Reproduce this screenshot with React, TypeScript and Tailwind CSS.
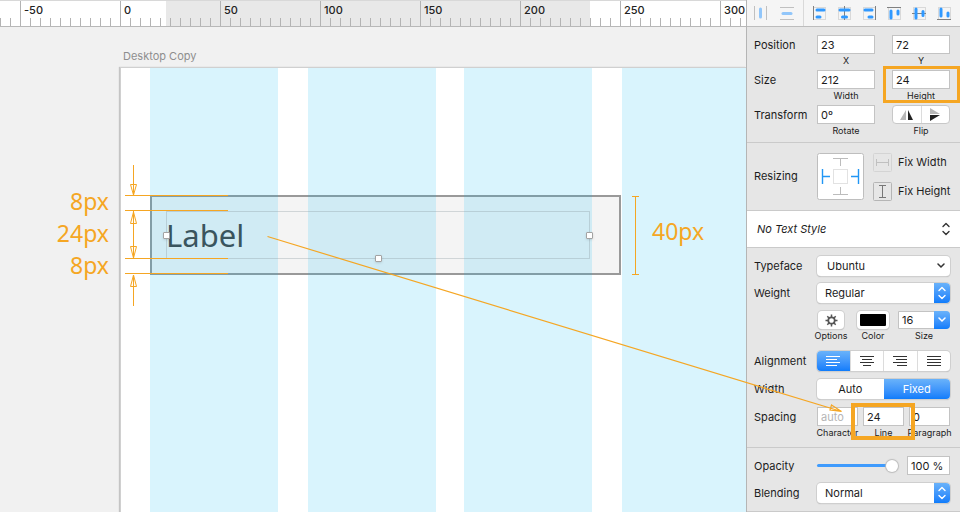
import React, { useState } from 'react';
import clsx from 'clsx';

const rulerUnits = ['-50', '0', '50', '100', '150', '200', '250', '300'];
const minorTicks = [1, 2, 3, 4, 5, 6, 7, 8, 9];

const Ruler: React.FC = () => (
    <div className="relative h-[27px] overflow-hidden border-t border-b border-t-[#d8d8d8] border-b-[#b8b8b8] bg-white">
        {/* Range covered by the selected layer */}
        <div className="absolute inset-y-0 left-[166px] w-[424px] bg-[#e8e8e8]" />
        <div className="relative flex h-full w-max">
            <div className="flex w-5 items-end gap-[9px]">
                <div className="h-2 w-px bg-[#b3b3b3]" />
                <div className="h-2 w-px bg-[#b3b3b3]" />
            </div>
            {rulerUnits.map((unit) => (
                <div key={unit} className="relative flex h-full w-[100px] items-end border-l border-[#b3b3b3]">
                    <span className="absolute top-0 left-[3px] text-[11px] leading-[18px] font-medium text-[#222]">{unit}</span>
                    {minorTicks.map((tick) => (
                        <div key={tick} className="ml-[9px] h-2 w-px bg-[#b3b3b3]" />
                    ))}
                </div>
            ))}
        </div>
    </div>
);

const Handle: React.FC<{ className: string }> = ({ className }) => (
    <div className={clsx('absolute size-[7px] rounded-[1px] border border-[#a3a3a3] bg-white shadow-sm', className)} />
);

const Canvas: React.FC = () => (
    <main className="relative flex min-w-0 flex-1 flex-col overflow-hidden bg-[#f1f1f1]">
        <Ruler />
        <p className="mt-5 ml-[123px] h-5 text-[11px] leading-[18px] text-[#8e8e8e]">Desktop Copy</p>
        <div className="relative ml-[120px] flex-1 border-t border-l border-[#d0d0d0] bg-white shadow-[-1px_0_1px_#c4c4c4]">
            {/* Form field and its text layer */}
            <div className="absolute top-[127px] left-[29px] h-20 w-[471px] border-2 border-[#999] bg-[#f4f4f4]">
                <span className="absolute top-3.5 left-3.5 font-['Noto_Sans'] text-[31px] leading-[48px] text-[#444]">Label</span>
            </div>
            {/* Layout columns */}
            <div className="absolute inset-0 grid grid-cols-[29px_128px_30px_128px_28px_128px_30px_1fr]">
                <div className="col-start-2 bg-[#00b7f2]/15" />
                <div className="col-start-4 bg-[#00b7f2]/15" />
                <div className="col-start-6 bg-[#00b7f2]/15" />
                <div className="col-start-8 bg-[#00b7f2]/15" />
            </div>
            {/* Selection */}
            <div className="absolute top-[143px] left-[45px] h-12 w-[424px] border border-[#8c9ca0]/35">
                <Handle className="top-5 -left-1" />
                <Handle className="top-5 -right-1" />
                <Handle className="-bottom-1 left-[208px]" />
            </div>
        </div>
    </main>
);

const Annotations: React.FC = () => (
    <div className="pointer-events-none absolute inset-0 font-['Noto_Sans'] text-[23px] leading-8 text-[#f5a623]">
        <svg className="absolute top-0 left-0" width="960" height="512" fill="none" stroke="#f5a623">
            <path d="M125 195.5H228M125 210.5H228M125 258.5H228M125 273.5H228" strokeWidth="1.2" />
            <path d="M133.5 165V195M130.5 184.5H136.5L133.5 195Z" />
            <path d="M133.5 211V258M130.5 223.5H136.5L133.5 212ZM130.5 246.5H136.5L133.5 258Z" />
            <path d="M133.5 275V306M130.5 286.5H136.5L133.5 275Z" />
            <path d="M635.5 196V274M632 196.5H639M632 274.5H639" />
            <path d="M267.5 236.5L841.5 411.5M831.5 405L841.5 411.5L830 410Z" strokeWidth="1.2" />
        </svg>
        <div className="absolute top-[185px] left-0 flex w-[109px] flex-col text-right">
            <span>8px</span>
            <span>24px</span>
            <span>8px</span>
        </div>
        <span className="absolute top-[215px] left-[652px]">40px</span>
    </div>
);

const alignTools = [
    { name: 'Align left', line: 'M1.5 0V14', bars: 'M5 4H12M5 11H8' },
    { name: 'Align center', line: 'M7.5 0V14', bars: 'M3 4H12M5.5 11H9.5' },
    { name: 'Align right', line: 'M13.5 0V14', bars: 'M3 4H10M7 11H10' },
    { name: 'Align top', line: 'M0 1.5H14', bars: 'M4 5V12M11 5V8' },
    { name: 'Align middle', line: 'M0 7.5H14', bars: 'M4 3V12M11 5.5V9.5' },
    { name: 'Align bottom', line: 'M0 13.5H14', bars: 'M4 3V10M11 7V10' },
];

const Toolbar: React.FC = () => (
    <div className="flex h-[27px] items-center border-b border-[#bdbdbd] bg-[#f5f5f5] pr-2 pl-[6px]">
        <button aria-label="Distribute horizontally" className="opacity-50">
            <svg className="block" width="15" height="14" fill="none">
                <path d="M1.5 0V14M13.5 0V14" stroke="#8c8c8c" />
                <path d="M7.5 3V11" stroke="#3099ff" strokeWidth="3" strokeLinecap="round" />
            </svg>
        </button>
        <button aria-label="Distribute vertically" className="ml-3 opacity-50">
            <svg className="block" width="14" height="14" fill="none">
                <path d="M0 1.5H14M0 13.5H14" stroke="#8c8c8c" />
                <path d="M3 7.5H11" stroke="#3099ff" strokeWidth="3" strokeLinecap="round" />
            </svg>
        </button>
        <div className="mr-2 ml-[9px] h-full w-px bg-[#d9d9d9]" />
        <div className="flex flex-1 justify-between">
            {alignTools.map((tool) => (
                <button key={tool.name} aria-label={tool.name}>
                    <svg className="block" width="15" height="15" fill="none">
                        <rect x="1.5" y="1.5" width="12" height="12" stroke="#d9d9d9" />
                        <path d={tool.line} stroke="#808080" />
                        <path d={tool.bars} stroke="#3099ff" strokeWidth="3" strokeLinecap="round" />
                    </svg>
                </button>
            ))}
        </div>
    </div>
);

const Row: React.FC<{ label: string; height?: string; children: React.ReactNode }> = ({ label, height = 'h-5', children }) => (
    <div className={clsx('grid grid-cols-[63px_minmax(0,1fr)] items-start', height)}>
        <span className="leading-5">{label}</span>
        {children}
    </div>
);

interface FieldProps {
    caption: string;
    value?: string;
    placeholder?: string;
    className?: string;
    highlight?: string;
}

const Field: React.FC<FieldProps> = ({ caption, value, placeholder, className, highlight }) => (
    <label className={clsx('relative flex flex-col items-center', className)}>
        <input
            defaultValue={value}
            placeholder={placeholder}
            className="h-[19px] w-full border border-[#c3c3c3] bg-white px-[3px] placeholder-[#b5b5b5] outline-none"
        />
        <span className="text-[9px] leading-[14px]">{caption}</span>
        {highlight && <span className={clsx('pointer-events-none absolute z-10 border-[#f5a623]', highlight)} />}
    </label>
);

const Chevrons: React.FC<{ className?: string }> = ({ className }) => (
    <svg className={className} width="8" height="14" fill="none" stroke="currentColor" strokeWidth="1.4" strokeLinecap="round" strokeLinejoin="round">
        <path d="M1 4.5L4 1.5L7 4.5M1 9.5L4 12.5L7 9.5" />
    </svg>
);

const Popup: React.FC<{ label: string; value: string }> = ({ label, value }) => (
    <div className="relative h-5">
        <select
            aria-label={label}
            className="h-5 w-full appearance-none rounded-[4px] bg-white pl-2 shadow-[0_0_0_1px_#cfcfcf,0_1px_1px_#aaa] outline-none"
        >
            <option>{value}</option>
        </select>
        <span className="pointer-events-none absolute inset-y-0 right-0 flex w-4 items-center justify-center rounded-r-[4px] bg-linear-to-b from-[#69b2fa] to-[#0d7cfb] text-white">
            <Chevrons />
        </span>
    </div>
);

const alignments = [
    { name: 'Left', d: 'M0 1.5H14M0 4.5H11M0 7.5H14M0 10.5H11' },
    { name: 'Center', d: 'M0 1.5H14M2 4.5H12M0 7.5H14M3 10.5H11' },
    { name: 'Right', d: 'M0 1.5H14M3 4.5H14M0 7.5H14M4 10.5H14' },
    { name: 'Justify', d: 'M0 1.5H14M0 4.5H14M0 7.5H14M0 10.5H14' },
];

const activeSegment = 'bg-linear-to-b from-[#69b2fa] to-[#0d7cfb] text-white';
const segmentGroup = 'flex h-5 overflow-hidden rounded-[4px] bg-white shadow-[0_0_0_1px_#cfcfcf,0_1px_1px_#aaa]';

const Inspector: React.FC = () => {
    const [align, setAlign] = useState('Left');
    const [width, setWidth] = useState('Fixed');
    const [opacity, setOpacity] = useState(100);

    return (
        <aside className="w-[214px] shrink-0 border-l border-[#b5b5b5] bg-[#e6e6e6]">
            <Toolbar />

            <section className="flex flex-col gap-[2px] border-b border-[#cacaca] pt-2 pr-[10px] pb-1 pl-[7px]">
                <Row label="Position" height="h-[33px]">
                    <div className="grid grid-cols-2 gap-[17px]">
                        <Field caption="X" value="23" />
                        <Field caption="Y" value="72" />
                    </div>
                </Row>
                <Row label="Size" height="h-[33px]">
                    <div className="grid grid-cols-2 gap-[17px]">
                        <Field caption="Width" value="212" />
                        <Field caption="Height" value="24" highlight="-top-1 -right-[10px] -left-[9px] h-[37px] border-3" />
                    </div>
                </Row>
                <Row label="Transform" height="h-[33px]">
                    <div className="grid grid-cols-2 gap-[17px]">
                        <Field caption="Rotate" value="0º" />
                        <div className="flex flex-col items-center">
                            <div className="flex h-[19px] w-full rounded-[4px] border border-[#c8c8c8] bg-white">
                                <button aria-label="Flip horizontally" className="flex flex-1 items-center justify-center border-r border-[#dcdcdc]">
                                    <svg width="14" height="12">
                                        <path d="M6 1V11H0Z" fill="#b8b8b8" />
                                        <path d="M8 1V11H13Z" fill="#222" />
                                    </svg>
                                </button>
                                <button aria-label="Flip vertically" className="flex flex-1 items-center justify-center">
                                    <svg width="12" height="13">
                                        <path d="M1 0V6H11Z" fill="#b8b8b8" />
                                        <path d="M1 7H11L1 13Z" fill="#222" />
                                    </svg>
                                </button>
                            </div>
                            <span className="text-[9px] leading-[14px]">Flip</span>
                        </div>
                    </div>
                </Row>
            </section>

            <section className="grid h-[68px] grid-cols-[63px_47px_1fr] items-center border-b border-[#cacaca] pl-[7px]">
                <span>Resizing</span>
                <svg width="47" height="47" fill="none">
                    <rect x=".5" y=".5" width="46" height="46" rx="2" fill="#fff" stroke="#bebebe" />
                    <rect x="16.5" y="16.5" width="14" height="14" stroke="#e2e2e2" />
                    <path d="M16 5.5H31M23.5 5V13M16 41.5H31M23.5 34V41" stroke="#bcbcbc" />
                    <path d="M5.5 16V31M5 23.5H13M41.5 16V31M34 23.5H42" stroke="#2196f5" strokeWidth="1.4" />
                </svg>
                <div className="flex flex-col gap-[10px] pl-[9px]">
                    <button className="flex items-center gap-[6px]">
                        <svg width="19" height="19" fill="none" stroke="#c0c0c0">
                            <rect x=".5" y=".5" width="18" height="18" rx="1" stroke="#d4d4d4" />
                            <path d="M3.5 6V13M15.5 6V13M3 9.5H16" />
                        </svg>
                        Fix Width
                    </button>
                    <button className="flex items-center gap-[6px]">
                        <svg width="19" height="19" fill="none" stroke="#777">
                            <rect x=".5" y=".5" width="18" height="18" rx="1" stroke="#b5b5b5" />
                            <path d="M6 3.5H13M6 15.5H13M9.5 3V16" />
                        </svg>
                        Fix Height
                    </button>
                </div>
            </section>

            <button className="flex h-[37px] w-full items-center justify-between border-b border-[#cacaca] bg-white pr-[10px] pl-[10px] italic">
                No Text Style
                <Chevrons className="text-[#333]" />
            </button>

            <section className="flex flex-col border-b border-[#cacaca] pt-2 pr-[10px] pb-2 pl-[7px]">
                <div className="flex flex-col gap-[7px]">
                    <Row label="Typeface">
                        <button className="flex h-5 items-center justify-between rounded-[4px] bg-white pr-[5px] pl-[10px] shadow-[0_0_0_1px_#cfcfcf,0_1px_1px_#aaa]">
                            Ubuntu
                            <svg width="8" height="6" fill="none" stroke="#333" strokeWidth="1.5" strokeLinecap="round">
                                <path d="M1 1L4 4L7 1" />
                            </svg>
                        </button>
                    </Row>
                    <Row label="Weight">
                        <Popup label="Weight" value="Regular" />
                    </Row>
                </div>

                <div className="mt-2 ml-[60px] flex h-8 justify-between">
                    <div className="flex w-[34px] flex-col items-center">
                        <button aria-label="Options" className="flex h-[19px] w-[26px] items-center justify-center rounded-[4px] bg-white shadow-[0_0_0_1px_#cfcfcf,0_1px_1px_#aaa]">
                            <svg width="13" height="13" viewBox="-6.5 -6.5 13 13" fill="none" stroke="#555">
                                <circle r="3.2" strokeWidth="1.8" />
                                <path d="M0-3.5V-6M0 3.5V6M-3.5 0H-6M3.5 0H6M2.5-2.5L4.2-4.2M-2.5-2.5L-4.2-4.2M2.5 2.5L4.2 4.2M-2.5 2.5L-4.2 4.2" strokeWidth="1.5" />
                            </svg>
                        </button>
                        <span className="text-[9px] leading-[14px]">Options</span>
                    </div>
                    <div className="flex flex-col items-center">
                        <button aria-label="Color" className="h-[19px] w-8 rounded-[4px] border-3 border-white bg-black shadow-[0_0_0_1px_#cfcfcf,0_1px_1px_#aaa]" />
                        <span className="text-[9px] leading-[14px]">Color</span>
                    </div>
                    <label className="relative flex w-[52px] flex-col items-center">
                        <input defaultValue="16" className="h-[19px] w-full rounded-r-[4px] border border-[#c3c3c3] bg-white px-[3px] outline-none" />
                        <span className="text-[9px] leading-[14px]">Size</span>
                        <span className="absolute top-0 right-0 flex h-[18px] w-4 items-center justify-center rounded-r-[4px] bg-linear-to-b from-[#69b2fa] to-[#0d7cfb]">
                            <svg width="8" height="6" fill="none" stroke="#fff" strokeWidth="1.5" strokeLinecap="round">
                                <path d="M1 1L4 4L7 1" />
                            </svg>
                        </span>
                    </label>
                </div>

                <div className="mt-2 flex flex-col gap-2">
                    <Row label="Alignment">
                        <div className={segmentGroup}>
                            {alignments.map((item) => (
                                <button
                                    key={item.name}
                                    aria-label={item.name}
                                    onClick={() => setAlign(item.name)}
                                    className={clsx('flex flex-1 items-center justify-center border-r border-[#dcdcdc] last:border-r-0', align === item.name ? activeSegment : 'text-[#333]')}
                                >
                                    <svg width="14" height="12" stroke="currentColor">
                                        <path d={item.d} />
                                    </svg>
                                </button>
                            ))}
                        </div>
                    </Row>
                    <Row label="Width">
                        <div className={segmentGroup}>
                            {['Auto', 'Fixed'].map((item) => (
                                <button key={item} onClick={() => setWidth(item)} className={clsx('flex-1', width === item && activeSegment)}>
                                    {item}
                                </button>
                            ))}
                        </div>
                    </Row>
                    <Row label="Spacing" height="h-8">
                        <div className="grid grid-cols-3 gap-[5px]">
                            <Field caption="Character" placeholder="auto" />
                            <Field caption="Line" value="24" highlight="-top-1 -left-3 h-[37px] w-16 border-4" />
                            <Field caption="Paragraph" value="0" />
                        </div>
                    </Row>
                </div>
            </section>

            <section className="flex flex-col gap-[7px] border-b border-[#cacaca] pt-2 pr-[10px] pb-2 pl-[7px]">
                <Row label="Opacity">
                    <div className="flex items-center gap-[9px]">
                        <input
                            type="range"
                            aria-label="Opacity"
                            value={opacity}
                            onChange={(e) => setOpacity(Number(e.target.value))}
                            className="h-[3px] w-full min-w-0 appearance-none rounded-full bg-[#3f9bfd] [&::-webkit-slider-thumb]:size-3 [&::-webkit-slider-thumb]:appearance-none [&::-webkit-slider-thumb]:rounded-full [&::-webkit-slider-thumb]:bg-white [&::-webkit-slider-thumb]:shadow-[0_0_1px_1px_#bbb]"
                        />
                        <input aria-label="Opacity value" readOnly value={`${opacity} %`} className="h-[19px] w-[43px] shrink-0 border border-[#c3c3c3] bg-white px-[3px] outline-none" />
                    </div>
                </Row>
                <Row label="Blending">
                    <Popup label="Blending" value="Normal" />
                </Row>
            </section>
        </aside>
    );
};

const App: React.FC = () => (
    <div className="relative flex min-h-screen w-full overflow-hidden font-['Inter',sans-serif] text-[11px] text-[#1c1c1c]">
        <Canvas />
        <Inspector />
        <Annotations />
    </div>
);

export default App;
